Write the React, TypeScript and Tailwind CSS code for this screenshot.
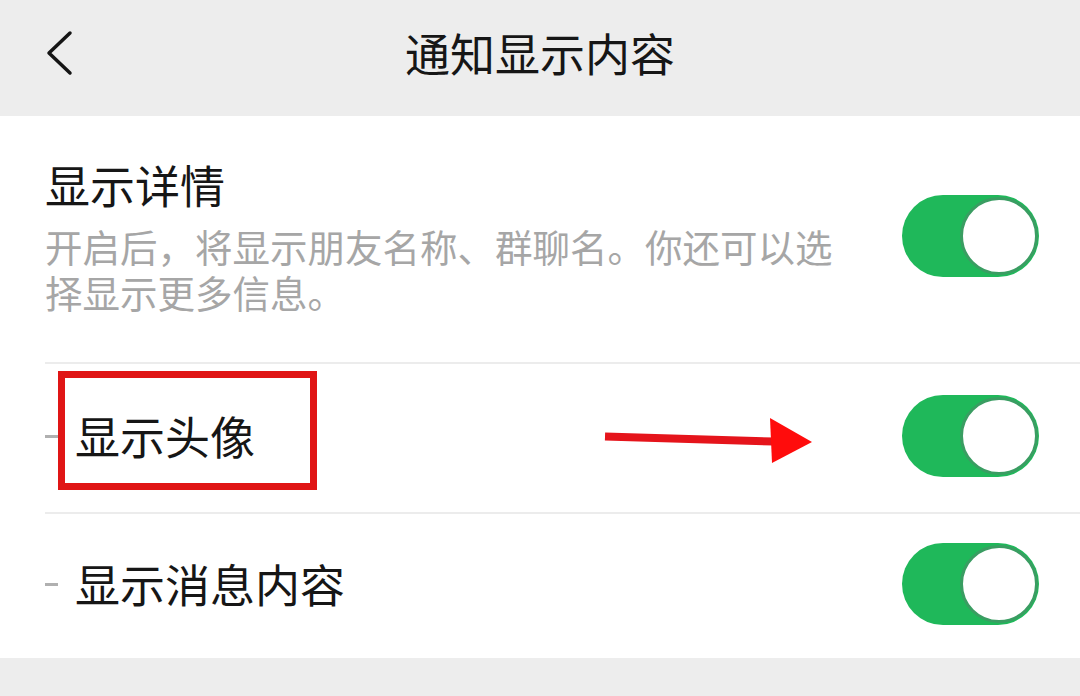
import React from "react";

const cjk = { fontFamily: '"Noto Sans CJK SC", "Noto Sans", sans-serif' };

function Toggle() {
  return (
    <div className="flex h-[82px] w-[137px] shrink-0 items-center justify-end rounded-full bg-[#1fb85a] pr-[1px]">
      <div className="h-[78px] w-[78px] rounded-full border-[3px] border-[#3a9d62] bg-white" />
    </div>
  );
}

function Dash() {
  return <span className="h-[3px] w-[13px] shrink-0 bg-[#b0b0b0]" />;
}

export default function App() {
  return (
    <div className="flex h-[696px] w-[1080px] flex-col bg-[#ededed]" style={cjk}>
      {/* top bar */}
      <header className="grid h-[116px] shrink-0 grid-cols-[1fr_auto_1fr] items-center pb-[10px]">
        <div className="pl-[44px]">
          <svg width="30" height="46" viewBox="0 0 30 46" fill="none">
            <path d="M26 3 L5 23 L26 43" stroke="#151515" strokeWidth="3.5" strokeLinecap="round" strokeLinejoin="round" />
          </svg>
        </div>
        <h1 className="text-[45px] leading-[56px] text-[#161616]">通知显示内容</h1>
        <div />
      </header>

      {/* settings list */}
      <section className="bg-white">
        <div className="ml-[45px] flex items-center justify-between border-b-2 border-[#ececec] pb-[47px] pr-[41px] pt-[41px]">
          <div className="flex flex-col">
            <span className="text-[45px] leading-[56px] text-[#161616]">显示详情</span>
            <p className="mt-[10px] w-[800px] text-[37.5px] leading-[46px] text-[#a6a6a6]">
              开启后，将显示朋友名称、群聊名。你还可以选择显示更多信息。
            </p>
          </div>
          <Toggle />
        </div>

        <div className="relative ml-[45px] flex h-[150px] items-center justify-between border-b-2 border-[#ececec] pb-[4px] pr-[41px]">
          <div className="flex items-center gap-[17px]">
            <Dash />
            <span className="text-[45px] leading-[56px] text-[#161616]">显示头像</span>
          </div>
          <Toggle />

          {/* annotation: red box */}
          <div className="absolute left-[13px] top-[7px] h-[119px] w-[259px] border-[7px] border-[#e01515]" />
          {/* annotation: arrow */}
          <svg className="absolute left-[555px] top-[51px]" width="215" height="53" viewBox="0 0 215 53">
            <path d="M5 21.5 L174 26.5" stroke="#e5141b" strokeWidth="8" />
            <path d="M170 3 L212 27 L172 48 Z" fill="#ff0c0c" />
          </svg>
        </div>

        <div className="ml-[45px] flex h-[144px] items-center justify-between pb-[4px] pr-[41px]">
          <div className="flex items-center gap-[17px]">
            <Dash />
            <span className="text-[45px] leading-[56px] text-[#161616]">显示消息内容</span>
          </div>
          <Toggle />
        </div>
      </section>

      <div className="flex-1" />
    </div>
  );
}
